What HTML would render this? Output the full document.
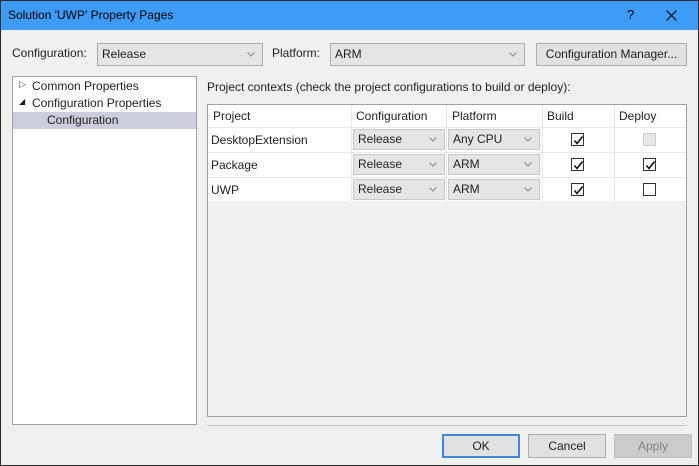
<!DOCTYPE html><html><head><style>
*{box-sizing:border-box;margin:0;padding:0}
body{width:699px;height:466px;overflow:hidden;font-family:"Segoe UI","Liberation Sans",sans-serif;font-size:12px;color:#1e1e1e;background:#f0f0f0;position:relative}
.a{position:absolute}
.win{left:0;top:0;width:699px;height:466px;border:1px solid #2b2b2b}
.title{left:1px;top:1px;width:697px;height:29px;background:#3e9cf7;color:#000}
.dd{background:#e5e5e5;border:1px solid #acacac;padding-left:4px;line-height:20px}
.c{position:absolute;right:7px;top:8px;width:8px;height:5px}
.btn{background:#e1e1e1;border:1px solid #adadad;text-align:center;line-height:21px}
.cell{position:absolute;line-height:24px;padding-left:4px}
.cb{position:absolute;width:13px;height:13px;border:1px solid #333;background:#fff}
.cb svg{position:absolute;left:1px;top:1px}
.sd{position:absolute;background:#e5e5e5;border:1px solid #c8c8c8;height:21px;line-height:19px;padding-left:4px}
.sd .c{top:7px}
</style></head><body>
<svg width="0" height="0" style="position:absolute"><defs><symbol id="ch" viewBox="0 0 8 5"><path d="M0.5 0.5L4 4L7.5 0.5" fill="none" stroke="#888" stroke-width="1"/></symbol><symbol id="ck" viewBox="0 0 11 11"><path d="M1.5 5.5L4 8.5L9.5 1.5" fill="none" stroke="#111" stroke-width="1.6"/></symbol></defs></svg>
<div class="a win"></div>
<div class="a title"><span class="a" style="left:7px;top:7px">Solution 'UWP' Property Pages</span><span class="a" style="left:626px;top:6px;font-size:13px">?</span>
<svg class="a" style="left:665px;top:9px" width="11" height="11"><path d="M0.5 0.5L10.5 10.5M10.5 0.5L0.5 10.5" stroke="#000" stroke-width="1.1"/></svg></div>
<span class="a" style="left:12px;top:46px">Configuration:</span>
<div class="a dd" style="left:97px;top:43px;width:166px;height:23px">Release<svg class="c"><use href="#ch"/></svg></div>
<span class="a" style="left:272px;top:46px">Platform:</span>
<div class="a dd" style="left:330px;top:43px;width:195px;height:23px">ARM<svg class="c"><use href="#ch"/></svg></div>
<div class="a btn" style="left:536px;top:43px;width:151px;height:23px">Configuration Manager...</div>
<div class="a" style="left:12px;top:76px;width:185px;height:349px;background:#fff;border:1px solid #a0a0a0"></div>
<div class="a" style="left:13px;top:112px;width:183px;height:17px;background:#cccedb"></div>
<span class="a" style="left:19px;top:79px;font-size:9px;color:#555">▷</span><span class="a" style="left:32px;top:79px">Common Properties</span>
<span class="a" style="left:19px;top:97px;font-size:8px">◢</span><span class="a" style="left:32px;top:96px">Configuration Properties</span>
<span class="a" style="left:47px;top:113px">Configuration</span>
<span class="a" style="left:207px;top:80px">Project contexts (check the project configurations to build or deploy):</span>
<div class="a" style="left:207px;top:104px;width:480px;height:313px;background:#f0f0f0;border:1px solid #a0a0a0"></div>
<div class="a" style="left:208px;top:105px;width:478px;height:96px;background:#fff"></div>
<div class="a" style="left:208px;top:127px;width:478px;height:1px;background:#e8e8e8"></div>
<div class="a" style="left:208px;top:152px;width:478px;height:1px;background:#e8e8e8"></div>
<div class="a" style="left:208px;top:177px;width:478px;height:1px;background:#e8e8e8"></div>
<div class="a" style="left:351px;top:105px;width:1px;height:96px;background:#e8e8e8"></div>
<div class="a" style="left:446px;top:105px;width:1px;height:96px;background:#e8e8e8"></div>
<div class="a" style="left:542px;top:105px;width:1px;height:96px;background:#e8e8e8"></div>
<div class="a" style="left:614px;top:105px;width:1px;height:96px;background:#e8e8e8"></div>
<div class="cell" style="left:209px;top:104px">Project</div><div class="cell" style="left:352px;top:104px">Configuration</div><div class="cell" style="left:448px;top:104px">Platform</div><div class="cell" style="left:543px;top:104px">Build</div><div class="cell" style="left:615px;top:104px">Deploy</div>
<div class="cell" style="left:207px;top:128px">DesktopExtension</div><div class="cell" style="left:207px;top:153px">Package</div><div class="cell" style="left:207px;top:178px">UWP</div>
<div class="sd" style="left:353px;top:129px;width:92px">Release<svg class="c"><use href="#ch"/></svg></div>
<div class="sd" style="left:353px;top:154px;width:92px">Release<svg class="c"><use href="#ch"/></svg></div>
<div class="sd" style="left:353px;top:179px;width:92px">Release<svg class="c"><use href="#ch"/></svg></div>
<div class="sd" style="left:448px;top:129px;width:92px">Any CPU<svg class="c"><use href="#ch"/></svg></div>
<div class="sd" style="left:448px;top:154px;width:92px">ARM<svg class="c"><use href="#ch"/></svg></div>
<div class="sd" style="left:448px;top:179px;width:92px">ARM<svg class="c"><use href="#ch"/></svg></div>
<div class="cb" style="left:571px;top:133px"><svg width="11" height="11"><use href="#ck"/></svg></div>
<div class="cb" style="left:571px;top:158px"><svg width="11" height="11"><use href="#ck"/></svg></div>
<div class="cb" style="left:571px;top:183px"><svg width="11" height="11"><use href="#ck"/></svg></div>
<div class="cb" style="left:643px;top:133px;border-color:#ccc;background:#e6e6e6"></div>
<div class="cb" style="left:643px;top:158px"><svg width="11" height="11"><use href="#ck"/></svg></div>
<div class="cb" style="left:643px;top:183px"></div>
<div class="a" style="left:207px;top:425px;width:480px;height:1px;background:#c8c8c8"></div>
<div class="a btn" style="left:442px;top:434px;width:78px;height:24px;border:2px solid #3a8ad8;line-height:20px">OK</div>
<div class="a btn" style="left:528px;top:434px;width:78px;height:24px;line-height:22px">Cancel</div>
<div class="a btn" style="left:614px;top:434px;width:78px;height:24px;line-height:22px;background:#ccc;border-color:#bfbfbf;color:#838383">Apply</div>
</body></html>
